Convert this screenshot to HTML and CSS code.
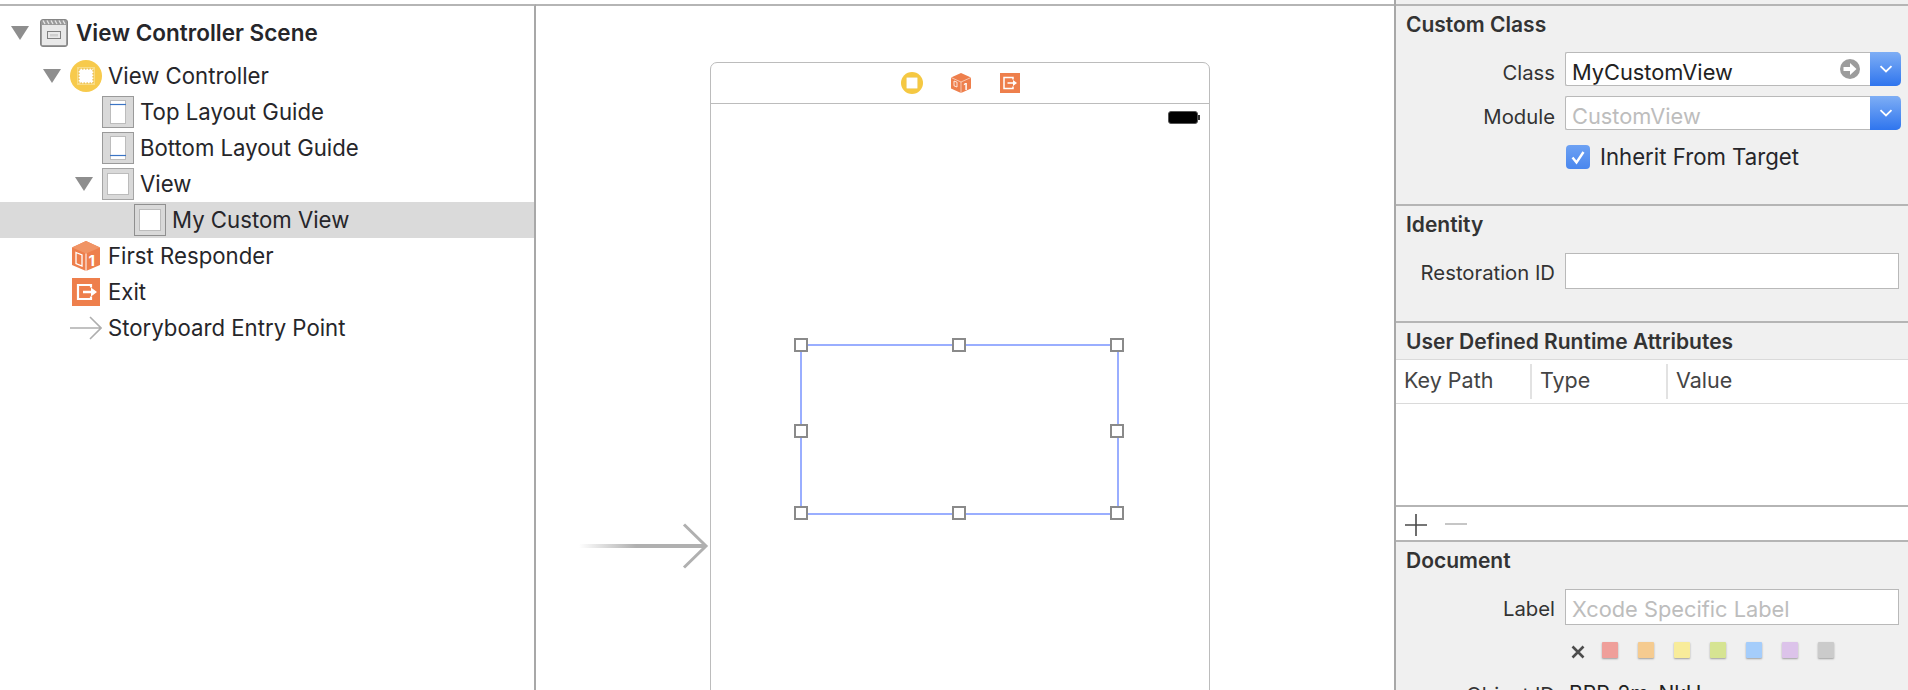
FILE: index.html
```html
<!DOCTYPE html>
<html lang="en">
<head>
<meta charset="utf-8">
<title>Custom View Storyboard</title>
<link rel="stylesheet" href="styles.css">
</head>
<body>
<div class="app">
  <nav class="outline">
    <div class="row scene">
      <svg class="tri" viewBox="0 0 18 14"><path d="M0 0H18L9 14Z"/></svg>
      <svg class="ic-scene" viewBox="0 0 28 28"><rect x=".5" y=".5" width="27" height="27" rx="2.500" fill="#9a9a9a" stroke="#858585"/><rect x="2" y="6" width="24" height="20" fill="#e9e9e9"/><path d="M3 1.500l2 3.500M7 1.500l2 3.500M11 1.500l2 3.500M15 1.500l2 3.500M19 1.500l2 3.500M23 1.500l2 3.500" stroke="#e4e4e4" stroke-width="1.400"/><rect x="7.500" y="12.500" width="13" height="7" fill="#e9e9e9" stroke="#808080"/><rect x="10" y="15" width="8" height="2.500" fill="#cfcfcf"/></svg>
      <span class="name bold">View Controller Scene</span>
    </div>
    <div class="row vc">
      <svg class="tri" viewBox="0 0 18 14"><path d="M0 0H18L9 14Z"/></svg>
      <svg class="ic-vc" viewBox="0 0 32 32"><circle cx="16" cy="16" r="16" fill="#f7ca4c"/><rect x="7" y="7" width="18" height="18" fill="#f9dc85"/><rect x="9" y="9" width="14" height="14" fill="#fff" stroke="#e6ae2e" stroke-dasharray="1.500 1.500"/></svg>
      <span class="name">View Controller</span>
    </div>
    <div class="row child">
      <svg class="ic-box" viewBox="0 0 32 32"><rect x=".5" y=".5" width="31" height="31" fill="#d9d9d9" stroke="#9a9a9a"/><rect x="8.500" y="4.500" width="15" height="23" fill="#fff" stroke="#bcbcbc"/><path d="M8 8.500H24" stroke="#3b74c4" stroke-width="1.200"/></svg>
      <span class="name">Top Layout Guide</span>
    </div>
    <div class="row child">
      <svg class="ic-box" viewBox="0 0 32 32"><rect x=".5" y=".5" width="31" height="31" fill="#d9d9d9" stroke="#9a9a9a"/><rect x="8.500" y="4.500" width="15" height="23" fill="#fff" stroke="#bcbcbc"/><path d="M8 23.500H24" stroke="#3b74c4" stroke-width="1.200"/></svg>
      <span class="name">Bottom Layout Guide</span>
    </div>
    <div class="row view">
      <svg class="tri" viewBox="0 0 18 14"><path d="M0 0H18L9 14Z"/></svg>
      <svg class="ic-box" viewBox="0 0 32 32"><rect x=".5" y=".5" width="31" height="31" fill="#d9d9d9" stroke="#a5a5a5"/><rect x="5.500" y="5.500" width="21" height="21" fill="#fff" stroke="#bcbcbc"/></svg>
      <span class="name">View</span>
    </div>
    <div class="row custom selected">
      <svg class="ic-box" viewBox="0 0 32 32"><rect x=".5" y=".5" width="31" height="31" fill="#d9d9d9" stroke="#8f8f8f"/><rect x="5.500" y="5.500" width="21" height="21" fill="#fff" stroke="#bcbcbc"/></svg>
      <span class="name">My Custom View</span>
    </div>
    <div class="row leaf">
      <svg class="ic-leaf" viewBox="0 0 28 30"><path d="M14 0L28 6.500V24L14 30L0 24V6.500Z" fill="#ee7f4c"/><path d="M14 0L28 6.500L14 12.500L0 6.500Z" fill="#f09465"/><path d="M14 12.500V30" stroke="#fff" stroke-width="1"/><path d="M4 11.500L10 14V25L4 22.500Z" fill="none" stroke="#fff" stroke-width="1.300"/><text class="cube-one" x="16.500" y="25">1</text></svg>
      <span class="name">First Responder</span>
    </div>
    <div class="row leaf">
      <svg class="ic-leaf exit" viewBox="0 0 28 28"><rect width="28" height="28" fill="#ee7f4c"/><path d="M19 9.500V7H6V21H19V18.500" fill="none" stroke="#fff" stroke-width="2.200"/><path d="M11 12.700H19V9.500L25 14L19 18.500V15.300H11Z" fill="#fff"/></svg>
      <span class="name">Exit</span>
    </div>
    <div class="row entry">
      <svg class="ic-entry" viewBox="0 0 32 24"><path d="M0 12H31M20 1L31 12L20 23" fill="none" stroke="#aeaeae" stroke-width="1.600"/></svg>
      <span class="name">Storyboard Entry Point</span>
    </div>
  </nav>

  <main class="canvas">
    <svg class="entry-arrow" viewBox="0 0 130 46"><defs><linearGradient id="fade" x1="0" x2="1" y1="0" y2="0"><stop offset="0" stop-color="#b0b0b0" stop-opacity="0"/><stop offset=".45" stop-color="#b0b0b0"/></linearGradient></defs><rect x="0" y="21" width="127" height="4" fill="url(#fade)"/><path d="M105 1.500L127 23L105 44.500" fill="none" stroke="#b0b0b0" stroke-width="3"/></svg>
    <section class="device">
      <header class="device-bar">
        <svg class="bar-ic" viewBox="0 0 22 22"><circle cx="11" cy="11" r="11" fill="#f5c842"/><rect x="5.500" y="5.500" width="11" height="11" rx="1" fill="#fff" stroke="#f3de9f"/></svg>
        <svg class="bar-ic" viewBox="0 0 20 22"><path d="M10 1L20 5.500V16.500L10 21L0 16.500V5.500Z" fill="#ee7f4c"/><path d="M0 5.500L10 10L20 5.500M10 10V21" stroke="#fff" stroke-width=".7" fill="none" opacity=".8"/><path d="M3 9L6 10.200V15L3 13.800Z" fill="none" stroke="#fff" stroke-width=".8"/><text class="cube-one small" x="12.500" y="18">1</text></svg>
        <svg class="bar-ic sm" viewBox="0 0 20 20"><rect width="20" height="20" fill="#ee7f4c"/><path d="M13 6.500V4.500H4V15.500H13V13.500" fill="none" stroke="#fff" stroke-width="1.500"/><path d="M7.500 9.200H13V7L17 10L13 13V10.800H7.500Z" fill="#fff"/></svg>
      </header>
      <div class="status"><span class="battery"></span><span class="nub"></span></div>
    </section>
    <div class="selection">
      <span class="handle tl"></span><span class="handle tc"></span><span class="handle tr"></span>
      <span class="handle ml"></span><span class="handle mr"></span>
      <span class="handle bl"></span><span class="handle bc"></span><span class="handle br"></span>
    </div>
  </main>

  <aside class="inspector">
    <section class="panel custom-class">
      <h2>Custom Class</h2>
      <div class="field first">
        <label>Class</label>
        <div class="combo"><span class="value">MyCustomView</span>
          <svg class="go" viewBox="0 0 20 20"><circle cx="10" cy="10" r="10" fill="#9c9c9c"/><path d="M3.500 8H10V4L16.500 10L10 16V12H3.500Z" fill="#fff"/></svg>
          <span class="drop"><svg viewBox="0 0 14 8"><path d="M1.500 1.200L7 6.500L12.500 1.200" fill="none" stroke="#fff" stroke-width="1.800"/></svg></span>
        </div>
      </div>
      <div class="field">
        <label>Module</label>
        <div class="combo"><span class="value muted">CustomView</span>
          <span class="drop"><svg viewBox="0 0 14 8"><path d="M1.500 1.200L7 6.500L12.500 1.200" fill="none" stroke="#fff" stroke-width="1.800"/></svg></span>
        </div>
      </div>
      <div class="check-row">
        <span class="check"><svg viewBox="0 0 24 24"><path d="M6.500 12.500L10.500 17.500L17.500 7" fill="none" stroke="#fff" stroke-width="2.400"/></svg></span>
        <span class="check-label">Inherit From Target</span>
      </div>
    </section>
    <section class="panel identity">
      <h2>Identity</h2>
      <div class="field first">
        <label>Restoration ID</label>
        <div class="input tall"></div>
      </div>
    </section>
    <section class="panel attrs">
      <h2>User Defined Runtime Attributes</h2>
      <div class="table-head">
        <span class="col key">Key Path</span><span class="col type">Type</span><span class="col val">Value</span>
      </div>
      <div class="table-body"></div>
      <div class="table-tools">
        <svg class="tool" viewBox="0 0 22 22"><path d="M0 11H22M11 0V22" stroke="#4a4a4a" stroke-width="1.600"/></svg>
        <svg class="tool minus" viewBox="0 0 22 22"><path d="M0 11H22" stroke="#b8b8b8" stroke-width="1.600"/></svg>
      </div>
    </section>
    <section class="panel document">
      <h2>Document</h2>
      <div class="field first">
        <label>Label</label>
        <div class="input tall"><span class="value muted">Xcode Specific Label</span></div>
      </div>
      <div class="swatches">
        <svg class="clear" viewBox="0 0 14 14"><path d="M1.500 1.500L12.500 12.500M12.500 1.500L1.500 12.500" stroke="#4d4d4d" stroke-width="2.600"/></svg>
        <span class="sw red"></span><span class="sw orange"></span><span class="sw yellow"></span><span class="sw green"></span><span class="sw blue"></span><span class="sw purple"></span><span class="sw gray"></span>
      </div>
      <div class="field oid">
        <label>Object ID</label>
        <span class="oid-value">BPP-2m-NkU</span>
      </div>
    </section>
  </aside>
</div>
</body>
</html>
```
FILE: styles.css
```css
* { box-sizing: border-box; margin: 0; padding: 0; }
html, body { height: 100%; overflow: hidden; background: #fff; }
body { font-family: Inter, "Liberation Sans", sans-serif; color: #26262a; font-size: 22.200px; }

.app {
  display: grid;
  grid-template-columns: 536px 1fr 514px;
  height: 690px;
  overflow: hidden;
}

/* outline */
.outline { margin-top: 4px; border-top: 2px solid #b5b5b5; border-right: 2px solid #a8a8a8; padding-top: 6px; }
.row { display: flex; align-items: center; height: 36px; }
.name { white-space: nowrap; margin-top: -2px; }
.bold { font-weight: 600; font-size: 22.500px; }
.tri { width: 18px; height: 14px; fill: #8e8e8e; flex: none; }
.scene { height: 42px; margin-bottom: 4px; padding-left: 11px; }
.scene .tri { margin-right: 11px; }
.ic-scene { width: 28px; height: 28px; margin-right: 8px; flex: none; }
.vc { padding-left: 43px; }
.vc .tri { margin-right: 9px; }
.ic-vc { width: 32px; height: 32px; margin-right: 6px; flex: none; }
.ic-box { width: 32px; height: 32px; margin-right: 6px; flex: none; }
.child { padding-left: 102px; }
.view { padding-left: 75px; }
.view .tri { margin-right: 9px; }
.custom { padding-left: 134px; }
.selected { background: #dadada; }
.leaf { padding-left: 72px; }
.ic-leaf { width: 28px; height: 30px; margin-right: 8px; flex: none; }
.ic-leaf.exit { height: 28px; }
.cube-one { font: 700 15px Inter, sans-serif; fill: #fff; }
.cube-one.small { font-size: 9px; }
.entry { padding-left: 70px; }
.ic-entry { width: 32px; height: 24px; margin-right: 6px; flex: none; }

/* canvas */
.canvas { position: relative; margin-top: 4px; border-top: 2px solid #b5b5b5; overflow: hidden; }
.device {
  position: absolute; left: 174px; top: 56px; width: 500px; height: 700px;
  border: 1.500px solid #bcbcbc; border-radius: 7px; background: #fff;
}
.device-bar {
  height: 41px; border-bottom: 1.500px solid #bcbcbc;
  display: flex; justify-content: center; align-items: center; gap: 27px; padding-left: 2px;
}
.bar-ic { width: 22px; height: 22px; flex: none; filter: blur(.3px); }
.bar-ic.sm { width: 20px; height: 20px; margin: 0 1px; }
.status { display: flex; justify-content: flex-end; align-items: center; padding: 7px 9px 0 0; }
.battery { width: 30px; height: 13px; background: #000; border-radius: 3px; border: 1px solid #555; }
.nub { width: 2px; height: 5px; background: #333; }
.entry-arrow { position: absolute; left: 43px; top: 517px; width: 130px; height: 46px; overflow: visible; }
.selection {
  position: absolute; left: 264px; top: 338px; width: 319px; height: 171px;
  border: 2px solid #9aaeff; z-index: 2;
}
.handle {
  position: absolute; width: 14px; height: 14px; background: #fff; border: 2px solid #8a8a8a;
}
.tl { left: -8px; top: -8px; } .tc { left: 150px; top: -8px; } .tr { right: -7px; top: -8px; }
.ml { left: -8px; top: 78px; } .mr { right: -7px; top: 78px; }
.bl { left: -8px; bottom: -7px; } .bc { left: 150px; bottom: -7px; } .br { right: -7px; bottom: -7px; }

/* inspector */
.inspector { background: #f0f0f0; border-left: 2px solid #a8a8a8; padding-top: 4px; font-size: 20.300px; color: #333; display: flex; flex-direction: column; }
.panel { border-top: 2px solid #b5b5b5; flex: none; }
h2 { font-size: 21px; font-weight: 600; color: #333; padding-left: 10px; line-height: 24px; padding-top: 7px; }
.custom-class { height: 200px; }
.identity { height: 117px; }
.attrs { height: 219px; }
.field { display: flex; align-items: center; height: 34px; }
.field.first { margin-top: 16px; }
.custom-class .field.first { margin-top: 15px; }
.custom-class .field + .field { margin-top: 10px; }
label { width: 159px; text-align: right; flex: none; white-space: nowrap; }
.custom-class label, .custom-class .value { padding-top: 6px; }
.identity label, .document label, .document .value { padding-top: 3px; }
.combo {
  display: flex; align-items: center; margin-left: 10px; width: 336px; height: 34px;
  background: #fff; border: 1px solid #b9b9b9; border-right: 0; border-radius: 2px 5px 5px 2px; position: relative;
}
.value { padding-left: 6px; flex: 1; color: #222; white-space: nowrap; font-size: 21.800px; }
.value.muted { color: #bdbdbd; }
.go { width: 20px; height: 20px; flex: none; margin-right: 10px; }
.drop {
  width: 31px; height: 34px; margin: -1px 0; flex: none; border-radius: 0 5px 5px 0;
  background: linear-gradient(#7eaef5, #2f75ee);
  display: flex; align-items: center; justify-content: center;
}
.drop svg { width: 14px; height: 8px; }
.check-row { display: flex; align-items: center; margin: 13px 0 0 170px; }
.check {
  width: 24px; height: 24px; border-radius: 4px; background: linear-gradient(#6da1f3, #4a87ee); flex: none; margin-right: 10px;
}
.check svg { display: block; }
.check-label { color: #26262a; white-space: nowrap; font-size: 22.200px; }
.input { margin-left: 10px; width: 334px; background: #fff; border: 1px solid #b9b9b9; display: flex; align-items: center; }
.input.tall { height: 36px; }
.identity .field, .document .field.first { height: 36px; }
.table-head { display: flex; align-items: center; height: 45px; margin-top: 5px; background: #fff; border-top: 1px solid #dadada; border-bottom: 1px solid #dadada; font-size: 21.500px; }
.col { height: 35px; line-height: 33px; white-space: nowrap; color: #444; }
.key { width: 136px; padding-left: 8px; border-right: 2px solid #e2e2e2; }
.type { width: 136px; padding-left: 8px; border-right: 2px solid #e2e2e2; }
.val { padding-left: 8px; }
.table-body { height: 101px; background: #fff; }
.table-tools { height: 37px; background: #fff; border-top: 2px solid #b5b5b5; display: flex; align-items: center; padding-left: 9px; gap: 18px; }
.tool { width: 22px; height: 22px; }
.tool.minus { margin-top: -2px; }
.swatches { display: flex; align-items: flex-start; margin: 17px 0 0 175px; height: 22px; }
.clear { width: 14px; height: 14px; margin: 3px 17px 0 0; flex: none; }
.sw { width: 16px; height: 16px; margin-right: 20px; flex: none; box-shadow: 0 1px 2px rgba(0,0,0,.35); border-radius: 1px; }
.red { background: #ef9f9a; } .orange { background: #f5cb90; } .yellow { background: #f8ec9a; }
.green { background: #d6e492; } .blue { background: #a5cdfb; } .purple { background: #dcc3ea; } .gray { background: #cbcbcb; }
.oid { margin-top: 12px; }
.oid-value { margin-left: 14px; color: #222; white-space: nowrap; font-size: 21px; }
```
